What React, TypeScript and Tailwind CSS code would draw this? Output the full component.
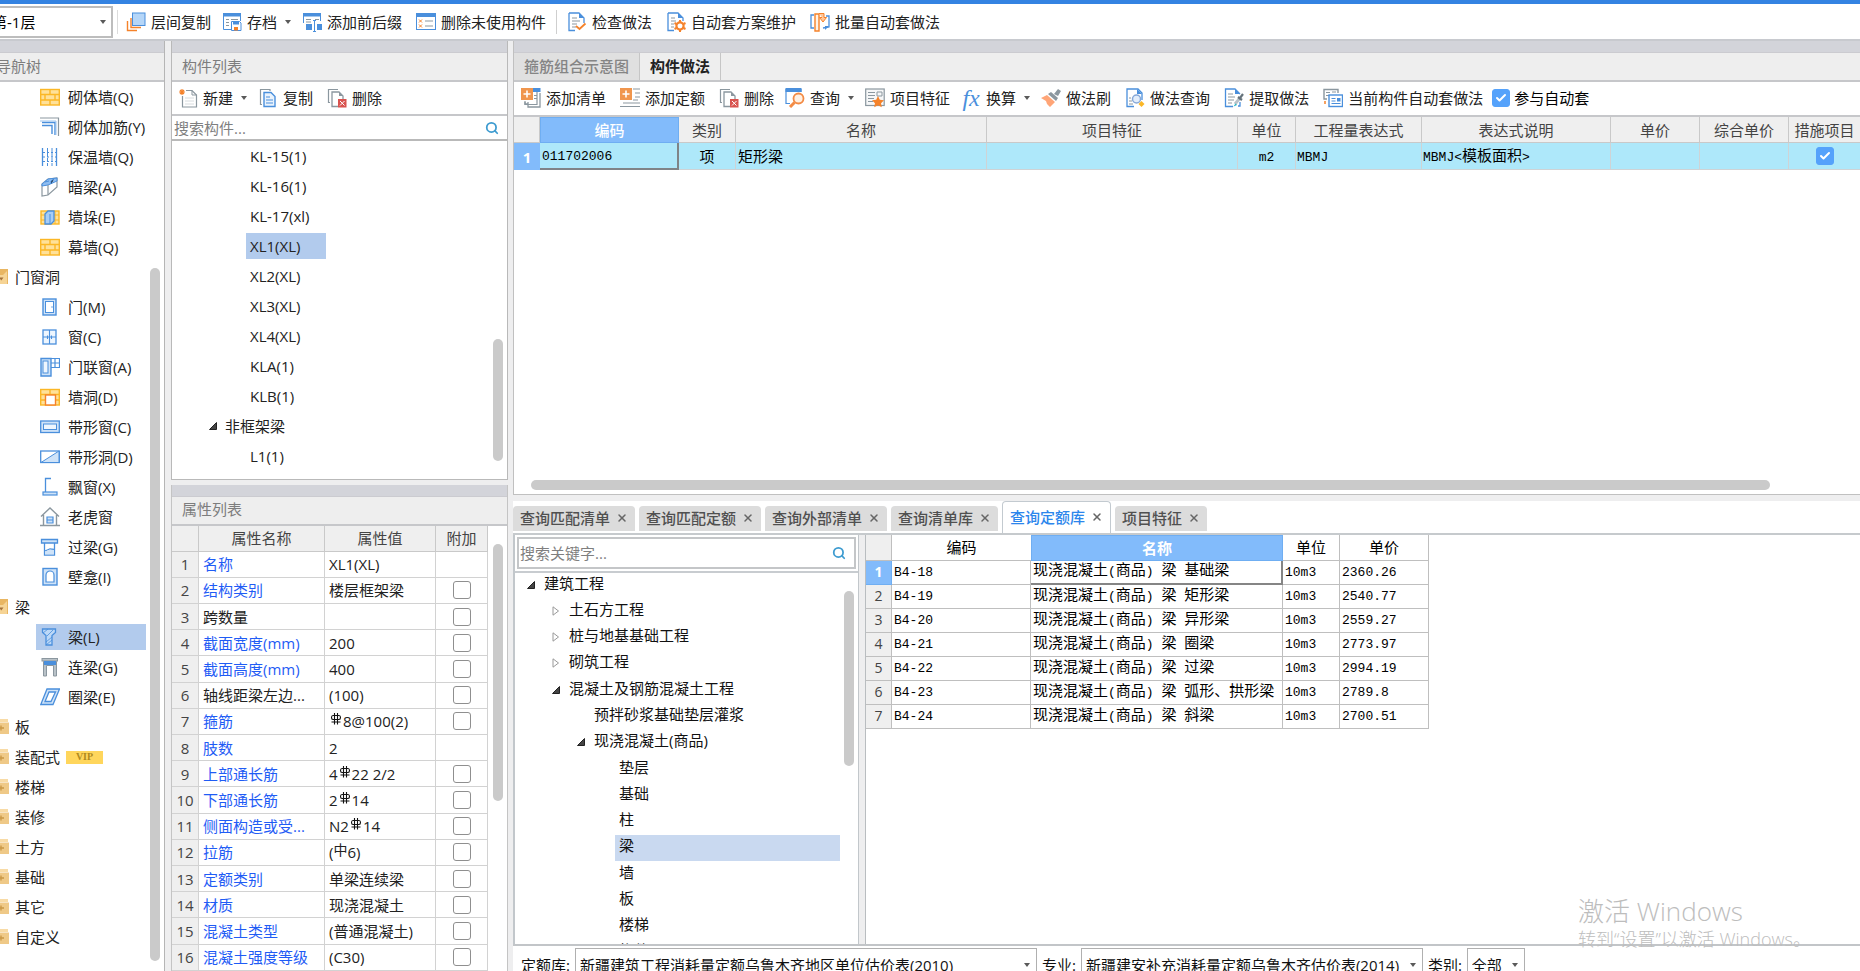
import { useState, type ReactNode } from "react";
import { Check, Search, X } from "lucide-react";
import clsx from "clsx";

const BLUE = "#4a8fdc";
const PALE = "#cfe3f8";
const GRAY = "#8b979f";
const ORANGE = "#f5822a";
const GOLD = "#fbb726";
const SAND = "#ffe199";

/* 20x20 toolbar and tree icons */
const ICONS: Record<string, ReactNode> = {
  layers: (
    <>
      <path d="M1.5 9v9.5H11M5 6v9.5h10" fill="none" stroke={ORANGE} strokeWidth="1.4" />
      <rect x="6.5" y="1" width="12.5" height="12.5" fill="#b5d6f8" stroke={BLUE} />
    </>
  ),
  archive: (
    <>
      <path d="M11 17.5H1.5V2M18.5 2v7" fill="none" stroke={BLUE} />
      <rect x="1" y="1" width="18" height="3.5" fill={BLUE} />
      <path d="M4 7.5h3M9 7.5h7M4 10.5h3M4 13.5h3" stroke={GRAY} />
      <path d="M9.5 9.5h8l1.5 1.5v7.500h-9.5z" fill="#fff" stroke={BLUE} />
      <rect x="11" y="9.500" width="6" height="3" fill={BLUE} />
      <rect x="12" y="15" width="4" height="3.500" fill={ORANGE} />
    </>
  ),
  prefix: (
    <>
      <path d="M1.500 11V2M18.5 2v7" stroke={BLUE} />
      <rect x="1" y="1" width="18" height="3.500" fill={BLUE} />
      <path d="M4 7.500h5M4 10h5M13 7.500h4" stroke={GRAY} />
      <rect x="4" y="12" width="6" height="6" fill={BLUE} />
      <rect x="15" y="12" width="5" height="6" fill={BLUE} />
      <path d="M12.500 9v10M11 8.500h3M11 19.500h3" stroke={BLUE} />
    </>
  ),
  unused: (
    <>
      <rect x=".5" y="1.500" width="19" height="16" fill="#fff" stroke={BLUE} />
      <rect x="0" y="1" width="20" height="4" fill={BLUE} />
      <path d="M3 7.500l3 3m0-3l-3 3M3 12.500l3 3m0-3l-3 3" stroke={ORANGE} />
      <path d="M9 9h8M9 14h8" stroke={GRAY} />
    </>
  ),
  check: (
    <>
      <path d="M2 1h10l5 5v5M8 18.500H2V1" fill="none" stroke={BLUE} strokeWidth="1.300" />
      <path d="M12 1v5h5z" fill={BLUE} />
      <path d="M5 6h5M5 9h8M5 12h5M5 15h4" stroke={GRAY} />
      <path d="M9 14l3.500 3 6-5.500" fill="none" stroke={ORANGE} strokeWidth="1.800" />
    </>
  ),
  plan: (
    <>
      <path d="M2 1h10l5 5v3M8 18.500H2V1" fill="none" stroke={BLUE} strokeWidth="1.300" />
      <path d="M12 1v5h5z" fill={BLUE} />
      <path d="M5 6h4M5 9h5M5 12h3M5 15h3" stroke={GRAY} />
      <circle cx="14" cy="14" r="3.600" fill="#fff" stroke={ORANGE} strokeWidth="2.200" />
      <path d="M14 8v2M14 18v2M8.500 11l2 1M17.500 16l2 1M8.500 17l2-1M17.500 12l2-1" stroke={ORANGE} strokeWidth="2" />
    </>
  ),
  batch: (
    <>
      <path d="M4 3H1v13h3M13 16l6-1V4h-3" fill="none" stroke={BLUE} strokeWidth="1.300" />
      <path d="M19 14l-4 4v-4z" fill={BLUE} />
      <path d="M5 2h4v17H5z" fill="#fff3e8" stroke={ORANGE} strokeWidth="1.400" />
      <path d="M9 1.500h5v4h2.500L13 10 9.500 5.500H12" fill="#ffc79c" stroke={ORANGE} />
    </>
  ),
  create: (
    <>
      <path d="M4.500 8v11h14V7l-4.500-4.500H8" fill="#fff" stroke={GRAY} strokeWidth="1.200" />
      <path d="M14 2.500V7h4.500" fill="none" stroke={GRAY} />
      <path d="M7 10h9M7 13h9M7 16h9" stroke="#d8dcdf" />
      <path d="M4 1v6M1 4h6M2 2l4 4M6 2L2 6" stroke={ORANGE} strokeWidth="1.200" />
    </>
  ),
  copy: (
    <>
      <path d="M4 16.500H2.500v-15H12V3" fill="none" stroke={GRAY} strokeWidth="1.200" />
      <path d="M6 4.500h7l4 4v10H6z" fill="#eaf3fd" stroke={BLUE} strokeWidth="1.400" />
      <path d="M8 9h4M8 12h7M8 15h7" stroke={BLUE} strokeWidth="1.200" />
    </>
  ),
  remove: (
    <>
      <path d="M3 14.500H1.500v-13H11" fill="none" stroke={GRAY} strokeWidth="1.200" />
      <path d="M11 18.500H5V4h7l4 4v3" fill="none" stroke={GRAY} strokeWidth="1.300" />
      <path d="M12 4v4h4z" fill={GRAY} />
      <rect x="11" y="11" width="8.500" height="8.500" fill="#d9534f" />
      <path d="M13 13l4.500 4.500m0-4.500L13 17.500" stroke="#fff" />
    </>
  ),
  addList: (
    <>
      <path d="M4 14v2h3M7 14v5h12V5" fill="none" stroke={GRAY} strokeWidth="1.300" />
      <path d="M4 13v3.500h12V3" fill="none" stroke={GRAY} strokeWidth="1.200" />
      <path d="M13 7.500h3M13 10.500h3" stroke={GRAY} />
      <rect x="12" y="0" width="7.500" height="4" fill={BLUE} />
      <rect x="0" y="0" width="12" height="12" fill="#f0964e" />
      <path d="M6 2.500v7M2.500 6h7" stroke="#fff" strokeWidth="1.600" />
    </>
  ),
  addQuota: (
    <>
      <path d="M13 1h7M15 5h5M15 9h5M13 12h5M3 15h17M0 18.500h20" stroke={GRAY} strokeWidth="1.200" />
      <rect x="0" y="0" width="12" height="12" fill="#f0964e" />
      <path d="M6 2.500v7M2.500 6h7" stroke="#fff" strokeWidth="1.600" />
    </>
  ),
  query: (
    <>
      <path d="M5 15.500H1V1M16 1v3" fill="none" stroke={BLUE} strokeWidth="1.200" />
      <rect x=".5" y="0" width="16" height="4" fill={BLUE} />
      <circle cx="13.500" cy="10.500" r="5" fill="#fff0e2" stroke="#f38b45" strokeWidth="1.800" />
      <path d="M9.500 14.500L5 19" stroke="#f38b45" strokeWidth="3" />
    </>
  ),
  feature: (
    <>
      <rect x=".7" y="1" width="18.500" height="16.500" fill="#f6f7f8" stroke={GRAY} strokeWidth="1.200" />
      <path d="M3 4.500h7M3 7.500h7M3 10.500h6M3 13.500h5M12 4h5v4h-5z" fill="none" stroke={GRAY} />
      <path d="M13 8l1.800 3.800 4.200.5-3 2.900.8 4.100-3.800-2-3.800 2 .8-4.100-3-2.900 4.200-.5z" fill={ORANGE} />
    </>
  ),
  brush: (
    <>
      <path d="M13 6l4-5 3 2-3 5z" fill={GRAY} />
      <path d="M7 6l3-2 7 6-2 3z" fill={GRAY} />
      <path d="M6 7l8 7-5 5-3-3-1-3-5-3z" fill="#ffa577" />
    </>
  ),
  lookup: (
    <>
      <path d="M9 18.500H2V1h11l4 4v7" fill="none" stroke={BLUE} strokeWidth="1.300" />
      <path d="M12 1v5h5z" fill={BLUE} />
      <path d="M4 10h2M4 13h3M4 16h4" stroke={GRAY} />
      <circle cx="11.500" cy="11" r="4" fill="#e2edfb" stroke="#86a8d8" strokeWidth="1.500" />
      <path d="M16.500 13l3 3-3 3-3-3z" fill={GOLD} />
    </>
  ),
  extract: (
    <>
      <path d="M9 18.500H1.500V1H11l5 5M16 14v4h-2" fill="none" stroke={BLUE} strokeWidth="1.300" />
      <path d="M11 1v5h5z" fill={BLUE} />
      <path d="M4 6h5M4 9h7M4 12h6M4 15h4" stroke={GRAY} />
      <path d="M11 16l5-6" stroke="#b9c2c8" strokeWidth="3" />
      <path d="M14 9l4 3M16 10l3-4" stroke="#66737c" strokeWidth="2.200" />
      <path d="M9.500 18.500l2-3 1.500 1.500z" fill="#25b7c6" />
    </>
  ),
  current: (
    <>
      <path d="M4 11H1V1.500h14V5" fill="none" stroke={GRAY} strokeWidth="1.400" />
      <path d="M3 4.500h4M3 7.500h3M9 4h4" stroke={GRAY} />
      <path d="M2 13v3" stroke={ORANGE} strokeWidth="1.500" />
      <rect x="6" y="7" width="13.500" height="11.500" fill="#fff" stroke={BLUE} strokeWidth="1.400" />
      <path d="M8.500 10.500h4M8.500 13h4M8.500 15.500h9" stroke={BLUE} />
      <rect x="14" y="10" width="3.500" height="3.500" fill={BLUE} />
    </>
  ),
  brick: (
    <>
      <rect x=".7" y="2.500" width="18.600" height="15.500" fill={SAND} stroke={GOLD} strokeWidth="1.400" />
      <path d="M1 7.500h18M1 13h18M10 2.500v5M5 7.500V13M15 7.500V13M10 13v5" stroke={GOLD} strokeWidth="1.400" />
    </>
  ),
  rebar: (
    <>
      <path d="M0 1h18.500v18" fill="none" stroke={GRAY} strokeWidth="1.200" />
      <path d="M2 5.500h13V18M2 8.500h10V17" fill="none" stroke={BLUE} strokeWidth="1.400" />
      <path d="M0 4h16v14" fill="none" stroke="#9cc4ef" />
    </>
  ),
  insulation: (
    <>
      <path d="M2.500 1v18M16.500 1v18" stroke={BLUE} strokeWidth="1.300" />
      <path d="M7.500 1v18M12 1v18" stroke={BLUE} strokeDasharray="4 1" />
      <path d="M3 5.500h13M3 10h13M3 14.500h13" stroke={BLUE} strokeDasharray="2 2" />
    </>
  ),
  hiddenBeam: (
    <>
      <path d="M2 7l6-5 9-1v9l-9 8-6 1z" fill="#fff" stroke={GRAY} strokeWidth="1.200" />
      <path d="M2 7l6-5 9-1v3l-9 4-6 1z" fill="#8fbdf0" stroke={BLUE} />
      <path d="M8 8v10" stroke={GRAY} strokeWidth="1.200" />
      <path d="M5 5l4-1m2 3V4l3-2" stroke={BLUE} />
    </>
  ),
  pier: (
    <>
      <rect x="1" y="4" width="18" height="13" fill={SAND} stroke={GOLD} strokeWidth="1.400" />
      <path d="M1 8h18M1 13h18M15 4v13" stroke={GOLD} />
      <path d="M5 7l3-3h6v10l-3 3H5z" fill="#a7cdf6" stroke={BLUE} strokeWidth="1.300" />
      <path d="M10 7v10" stroke={BLUE} />
    </>
  ),
  door: (
    <>
      <rect x="3" y="2" width="13" height="16" fill={PALE} stroke={BLUE} strokeWidth="1.400" />
      <rect x="5.500" y="4.500" width="8" height="11" fill="#fff" stroke={BLUE} />
      <path d="M11.500 10h1" stroke={BLUE} strokeWidth="1.500" />
    </>
  ),
  window: (
    <>
      <rect x="3" y="3" width="13" height="14" fill="#eef6fe" stroke={BLUE} strokeWidth="1.300" />
      <path d="M9.500 3v14M3 10h13M7.500 8.500V12M11.500 8.500V12" stroke={BLUE} strokeWidth="1.100" />
    </>
  ),
  doorWindow: (
    <>
      <path d="M1 1.500h10V19H1z" fill={PALE} stroke={BLUE} strokeWidth="1.400" />
      <rect x="3" y="4" width="5" height="12" fill="#eef6fe" stroke={BLUE} />
      <path d="M11 1.500h8.500v9H11M11 6h8M15 2v8.500" fill="none" stroke={BLUE} strokeWidth="1.200" />
    </>
  ),
  wallHole: (
    <>
      <rect x=".7" y="2.500" width="18.600" height="15.500" fill={SAND} stroke={GOLD} strokeWidth="1.400" />
      <path d="M1 7.500h18M1 13h5M10 2.500v5M15 13h4" stroke={GOLD} strokeWidth="1.400" />
      <rect x="5.500" y="8" width="10" height="10" fill="#fff" stroke={ORANGE} strokeWidth="1.400" />
    </>
  ),
  stripWindow: (
    <>
      <rect x=".7" y="4" width="18.600" height="11.500" fill={PALE} stroke={BLUE} strokeWidth="1.300" />
      <rect x="3.500" y="7" width="13" height="5.500" fill="#eef6fe" stroke={BLUE} />
    </>
  ),
  stripHole: (
    <>
      <rect x=".7" y="4" width="18.600" height="11.500" fill="#fff" stroke={BLUE} strokeWidth="1.300" />
      <path d="M1 15.500L19 4v11.500z" fill={PALE} stroke={BLUE} />
    </>
  ),
  bayWindow: (
    <>
      <path d="M11 1.500H5.500V15" fill="none" stroke={BLUE} strokeWidth="1.300" />
      <rect x="3" y="15" width="14" height="3" fill={PALE} stroke={BLUE} strokeWidth="1.200" />
    </>
  ),
  dormer: (
    <>
      <path d="M1 9.500L10 1l9 8.500M3.500 8v10M16.500 8v10M0 18.500h20" fill="none" stroke={GRAY} strokeWidth="1.400" />
      <path d="M7 10h6v6H7zM7 13h6" fill={PALE} stroke={BLUE} strokeWidth="1.200" />
    </>
  ),
  lintel: (
    <>
      <path d="M1.500 2.500h16V6h-16z" fill={PALE} stroke={BLUE} strokeWidth="1.300" />
      <path d="M4.500 6v12h10V6M5 14l5-2 4 .5" fill="none" stroke={BLUE} strokeWidth="1.300" />
      <path d="M5 14.500l5-2 4 .5v4.500H5z" fill={PALE} />
    </>
  ),
  niche: (
    <>
      <rect x="3" y="1.500" width="14" height="16.500" fill={PALE} stroke={BLUE} strokeWidth="1.400" />
      <path d="M6 15V8a4 4 0 0 1 8 0v7z" fill="#fff" stroke={BLUE} strokeWidth="1.200" />
    </>
  ),
  beam: (
    <>
      <path d="M2.500 2h13v3.500l-3.500 3V18H6V8.500l-3.500-3z" fill="#bcd8f7" stroke={BLUE} strokeWidth="1.300" />
      <path d="M3 6l5-4M7 9l6-6M6 15l6-5M6 18l6-5" stroke={BLUE} strokeWidth=".8" />
    </>
  ),
  linkBeam: (
    <>
      <path d="M3.500 19V4.500h13V19h-3V8.500h-7V19z" fill="#b9c2c8" stroke={GRAY} />
      <rect x="2" y="1.500" width="15.500" height="2.500" fill="#b9c2c8" stroke={GRAY} />
      <rect x="4" y="4" width="12" height="4" fill={BLUE} />
    </>
  ),
  ringBeam: (
    <path d="M7 2h12.500L13 17.500H.8zM9 5h6.500L11 14.500H5z" fill={PALE} fillRule="evenodd" stroke={BLUE} strokeWidth="1.300" />
  ),
  folderOpen: (
    <>
      <path d="M1 4h6l2-2h10v15H1z" fill="#e9b662" />
      <path d="M1 8h13l4-4v13H1z" fill="#f6d495" />
      <path d="M10 10.500h4.500L12.250 13.500z" fill="#a5713a" />
    </>
  ),
  folder: (
    <>
      <path d="M1 4h5l2-2h11v3H1z" fill="#f8dba6" />
      <path d="M1 5.500h19V17H1z" fill="#efc987" />
      <path d="M9 11h6M12 8.500v5" stroke="#c99745" strokeWidth="1.300" />
    </>
  ),
};

function Icon({ name, className }: { name: string; className?: string }) {
  return (
    <svg viewBox="0 0 20 20" className={clsx("size-5 shrink-0", className)} aria-hidden="true">
      {ICONS[name]}
    </svg>
  );
}

function Caret({ className }: { className?: string }) {
  return (
    <svg viewBox="0 0 6 4" className={clsx("h-1 w-1.5 shrink-0", className)} aria-hidden="true">
      <path d="M0 0h6L3 4z" fill="#5a5a5a" />
    </svg>
  );
}

function ToolButton({ icon, label, menu }: { icon: string; label: string; menu?: boolean }) {
  return (
    <button type="button" className={clsx("flex h-7 shrink-0 items-center gap-[5px] whitespace-nowrap rounded hover:bg-blue-50", menu ? "px-0.5" : "px-[5px]")}>
      {icon === "fx" ? (
        <span className="w-5 text-center font-['Liberation_Serif',serif] text-2xl leading-5 italic text-[#4a8fdc]">fx</span>
      ) : (
        <Icon name={icon} />
      )}
      {label}
      {menu && <Caret className="ml-[3px]" />}
    </button>
  );
}

function CheckBox({ id, label, defaultChecked }: { id: string; label?: string; defaultChecked?: boolean }) {
  return (
    <span className="relative inline-flex size-[18px] align-middle">
      <input
        id={id}
        type="checkbox"
        aria-label={label}
        defaultChecked={defaultChecked}
        className="peer size-[18px] appearance-none rounded-[3px] border border-[#8f8f8f] bg-white checked:border-[#55a2fb] checked:bg-[#55a2fb]"
      />
      <Check className="pointer-events-none absolute inset-0 m-auto hidden size-3 text-white peer-checked:block" strokeWidth={4} />
    </span>
  );
}

function PanelTitle({ children }: { children: ReactNode }) {
  return (
    <>
      <div className="h-3 shrink-0 border-b border-[#cbcbd0] bg-[#d3d4da]" />
      <h2 className="flex h-[29px] shrink-0 items-center border-b-2 border-[#c6c7ca] bg-[#eeeeee] px-2.5 pb-0.5 text-[#7d7d7d]">{children}</h2>
    </>
  );
}

/* Song-style grid text: narrow half-width characters between full-width ones */
function GridText({ text }: { text: string }) {
  return (
    <span className="font-['Liberation_Mono','Noto_Sans_CJK_SC',monospace] text-[13px]">
      {text.split(/([^\x00-\x7f]+)/).map((part, i) => (i % 2 ? <span key={i} className="text-[15px]">{part}</span> : part))}
    </span>
  );
}

function Rebar() {
  return (
    <svg viewBox="0 0 12 12" className="mx-px inline-block size-3 align-[2px]" role="img" aria-label="HRB400">
      <path d="M3 2.500h6q1.500 0 1.500 2t-1.500 2H3q-1.500 0-1.500-2t1.500-2zM4.500 0v11.500M7.500 0v11.500M1.500 9h9" fill="none" stroke="#111" strokeWidth="1.100" />
    </svg>
  );
}

const NAV: { label: string; icon?: string; open?: boolean; vip?: boolean }[] = [
  { label: "砌体墙(Q)", icon: "brick" },
  { label: "砌体加筋(Y)", icon: "rebar" },
  { label: "保温墙(Q)", icon: "insulation" },
  { label: "暗梁(A)", icon: "hiddenBeam" },
  { label: "墙垛(E)", icon: "pier" },
  { label: "幕墙(Q)", icon: "brick" },
  { label: "门窗洞", open: true },
  { label: "门(M)", icon: "door" },
  { label: "窗(C)", icon: "window" },
  { label: "门联窗(A)", icon: "doorWindow" },
  { label: "墙洞(D)", icon: "wallHole" },
  { label: "带形窗(C)", icon: "stripWindow" },
  { label: "带形洞(D)", icon: "stripHole" },
  { label: "飘窗(X)", icon: "bayWindow" },
  { label: "老虎窗", icon: "dormer" },
  { label: "过梁(G)", icon: "lintel" },
  { label: "壁龛(I)", icon: "niche" },
  { label: "梁", open: true },
  { label: "梁(L)", icon: "beam" },
  { label: "连梁(G)", icon: "linkBeam" },
  { label: "圈梁(E)", icon: "ringBeam" },
  { label: "板" },
  { label: "装配式", vip: true },
  { label: "楼梯" },
  { label: "装修" },
  { label: "土方" },
  { label: "基础" },
  { label: "其它" },
  { label: "自定义" },
];

function NavTree() {
  const [selected, setSelected] = useState("梁(L)");
  return (
    <aside className="relative flex w-[165px] shrink-0 flex-col overflow-hidden border-r border-[#b5b5b5] bg-white">
      <PanelTitle>
        <span className="-ml-3.5">导航树</span>
      </PanelTitle>
      <ul>
        {NAV.map((item) => (
          <li key={item.label} className="flex h-[30px] items-center">
            {item.icon ? (
              <button
                type="button"
                onClick={() => setSelected(item.label)}
                className={clsx("ml-9 flex h-[26px] w-[110px] items-center gap-2 whitespace-nowrap pl-1", selected === item.label && "bg-[#b2cbed]")}
              >
                <Icon name={item.icon} />
                {item.label}
              </button>
            ) : (
              <button type="button" className="-ml-[11px] flex items-center gap-1.5">
                <Icon name={item.open ? "folderOpen" : "folder"} />
                {item.label}
                {item.vip && (
                  <span className="flex h-[13px] w-[37px] items-center justify-center bg-[#ffd65c] font-['Liberation_Serif',serif] text-[10px] font-bold text-[#b08a1e]">VIP</span>
                )}
              </button>
            )}
          </li>
        ))}
      </ul>
      <div className="absolute top-[227px] right-1 bottom-2.5 w-2.5 rounded-full bg-[#cacaca]" />
    </aside>
  );
}

const COMPONENTS = ["KL-15(1)", "KL-16(1)", "KL-17(xl)", "XL1(XL)", "XL2(XL)", "XL3(XL)", "XL4(XL)", "KLA(1)", "KLB(1)", "非框架梁", "L1(1)"];

function TreeArrow({ open }: { open: boolean }) {
  return (
    <svg viewBox="0 0 8 10" className="h-2.5 w-2 shrink-0" aria-hidden="true">
      {open ? <path d="M7.500 1.500v7H.5z" fill="#444" stroke="#222" /> : <path d="M1 .8v8.400L6.500 5z" fill="#fff" stroke="#999" />}
    </svg>
  );
}

function ComponentList() {
  const [selected, setSelected] = useState("XL1(XL)");
  return (
    <section className="relative flex min-h-0 flex-[438_1_0px] flex-col overflow-hidden border border-t-0 border-[#b9b9b9] bg-white">
      <PanelTitle>构件列表</PanelTitle>
      <div className="flex h-[34px] shrink-0 items-center gap-1 border-b-2 border-[#c6c7ca] px-1">
        <ToolButton icon="create" label="新建" menu />
        <ToolButton icon="copy" label="复制" />
        <ToolButton icon="remove" label="删除" />
      </div>
      <div className="flex h-[25px] shrink-0 items-center border-b-2 border-[#b9b9b9] pr-2">
        <input aria-label="搜索构件" placeholder="搜索构件..." className="min-w-0 flex-1 px-0.5 outline-none placeholder:text-[#7f7f7f]" />
        <Search className="size-3.5 text-[#3d9bd0]" strokeWidth={3} />
      </div>
      <ul>
        {COMPONENTS.map((name) => (
          <li key={name} className="flex h-[30px] items-center">
            {name === "非框架梁" ? (
              <button type="button" className="ml-[37px] flex items-center gap-2">
                <TreeArrow open />
                {name}
              </button>
            ) : (
              <button
                type="button"
                onClick={() => setSelected(name)}
                className={clsx("ml-[74px] h-[26px] w-20 pl-1 text-left", selected === name && "bg-[#b2cbed]")}
              >
                {name}
              </button>
            )}
          </li>
        ))}
      </ul>
      <div className="absolute right-1 bottom-[18px] h-[122px] w-2.5 rounded-full bg-[#cacaca]" />
    </section>
  );
}

const PROPS: { name: string; value: ReactNode; link?: boolean; box?: boolean }[] = [
  { name: "名称", value: "XL1(XL)", link: true },
  { name: "结构类别", value: "楼层框架梁", link: true, box: true },
  { name: "跨数量", value: "", box: true },
  { name: "截面宽度(mm)", value: "200", link: true, box: true },
  { name: "截面高度(mm)", value: "400", link: true, box: true },
  { name: "轴线距梁左边...", value: "(100)", box: true },
  { name: "箍筋", value: <><Rebar />8@100(2)</>, link: true, box: true },
  { name: "肢数", value: "2", link: true },
  { name: "上部通长筋", value: <>4<Rebar />22 2/2</>, link: true, box: true },
  { name: "下部通长筋", value: <>2<Rebar />14</>, link: true, box: true },
  { name: "侧面构造或受...", value: <>N2<Rebar />14</>, link: true, box: true },
  { name: "拉筋", value: <>(<span className="align-[3px] text-sm leading-none">中</span>6)</>, link: true, box: true },
  { name: "定额类别", value: "单梁连续梁", link: true, box: true },
  { name: "材质", value: "现浇混凝土", link: true, box: true },
  { name: "混凝土类型", value: "(普通混凝土)", link: true, box: true },
  { name: "混凝土强度等级", value: "(C30)", link: true, box: true },
];

function PropertyList() {
  const head = "border-r border-b border-[#c9c9c9] font-normal text-[#444]";
  const cell = "border-r border-b border-[#d2d2d2] whitespace-nowrap";
  return (
    <section className="flex min-h-0 flex-[487_1_0px] flex-col overflow-hidden border-x border-[#c4c4c4] bg-white">
      <PanelTitle>属性列表</PanelTitle>
      <div className="relative min-h-0 flex-1">
        <table className="h-full w-[316px] table-fixed border-separate border-spacing-0 leading-5">
          <thead>
            <tr className="h-[26px] bg-[#efefef]">
              <th className={clsx(head, "w-[27px]")} />
              <th className={clsx(head, "w-[126px]")}>属性名称</th>
              <th className={clsx(head, "w-[111px]")}>属性值</th>
              <th className={head}>附加</th>
            </tr>
          </thead>
          <tbody>
            {PROPS.map((row, i) => (
              <tr key={row.name}>
                <td className={clsx(cell, "bg-[#efefef] text-center text-[#444]")}>{i + 1}</td>
                <td className={clsx(cell, "pl-1", row.link && "text-[#1f5cf5]")}>{row.name}</td>
                <td className={clsx(cell, "pl-1")}>{row.value}</td>
                <td className={clsx(cell, "text-center leading-none")}>{row.box && <CheckBox id={`prop-${i}`} label={`${row.name}附加`} />}</td>
              </tr>
            ))}
          </tbody>
        </table>
        <div className="absolute top-[18px] right-1 h-[257px] w-2.5 rounded-full bg-[#cacaca]" />
      </div>
    </section>
  );
}

const METHOD_TOOLS = [
  { icon: "addList", label: "添加清单" },
  { icon: "addQuota", label: "添加定额" },
  { icon: "remove", label: "删除" },
  { icon: "query", label: "查询", menu: true },
  { icon: "feature", label: "项目特征" },
  { icon: "fx", label: "换算", menu: true },
  { icon: "brush", label: "做法刷" },
  { icon: "lookup", label: "做法查询" },
  { icon: "extract", label: "提取做法" },
  { icon: "current", label: "当前构件自动套做法" },
];

function MethodPanel() {
  const head = "border-r border-b border-[#c9c9c9] font-normal";
  const cell = "border-r border-b border-[#cfd3d5] px-px";
  return (
    <section className="relative flex min-h-0 flex-[453_1_0px] flex-col overflow-hidden border-b border-l border-[#c0c0c0] bg-white">
      <div className="h-3 shrink-0 border-b border-[#cbcbd0] bg-[#d3d4da]" />
      <div className="flex h-[29px] shrink-0 border-b-2 border-[#c6c7ca] bg-[#eeeeee]">
        <button type="button" className="border-r border-[#c6c6c6] bg-[#e0e0e0] px-2.5 pb-0.5 font-medium text-[#858585]">箍筋组合示意图</button>
        <button type="button" className="border-r border-[#c6c6c6] px-2.5 pb-0.5 font-bold text-[#222]">构件做法</button>
      </div>
      <div className="flex h-[35px] shrink-0 items-center gap-1 border-b-2 border-[#c6c7ca] px-0.5 pb-0.5">
        {METHOD_TOOLS.map((tool) => (
          <ToolButton key={tool.label} {...tool} />
        ))}
        <CheckBox id="auto-join" defaultChecked />
        <label htmlFor="auto-join" className="whitespace-nowrap text-black">参与自动套</label>
      </div>
      <table className="w-full table-fixed border-separate border-spacing-0 leading-5">
        <thead>
          <tr className="h-[26px] bg-[#efefef] text-[#444]">
            <th className={clsx(head, "w-[26px]")} />
            <th className="w-[139px] border border-[#6faef2] bg-[#82bbfb] font-medium text-white">编码</th>
            <th className={clsx(head, "w-[57px]")}>类别</th>
            <th className={head}>名称</th>
            <th className={head}>项目特征</th>
            <th className={clsx(head, "w-[58px]")}>单位</th>
            <th className={clsx(head, "w-[126px]")}>工程量表达式</th>
            <th className={clsx(head, "w-[189px]")}>表达式说明</th>
            <th className={clsx(head, "w-[89px]")}>单价</th>
            <th className={clsx(head, "w-[89px]")}>综合单价</th>
            <th className="w-[71px] border-b border-[#c9c9c9] font-normal whitespace-nowrap">措施项目</th>
          </tr>
        </thead>
        <tbody>
          <tr className="h-[27px] bg-[#aee8fa] text-black">
            <td className="bg-[#82bbfb] text-center font-bold text-white">1</td>
            <td className="border-r-2 border-b-2 border-[#7f8487] pl-0.5"><GridText text="011702006" /></td>
            <td className={clsx(cell, "text-center")}>项</td>
            <td className={clsx(cell, "pl-0.5")}>矩形梁</td>
            <td className={cell} />
            <td className={clsx(cell, "text-center")}><GridText text="m2" /></td>
            <td className={cell}><GridText text="MBMJ" /></td>
            <td className={cell}><GridText text="MBMJ<模板面积>" /></td>
            <td className={cell} />
            <td className={cell} />
            <td className="border-b border-[#cfd3d5] text-center leading-none"><CheckBox id="measure" label="措施项目" defaultChecked /></td>
          </tr>
        </tbody>
      </table>
      <div className="absolute right-[90px] bottom-1 left-[17px] h-2.5 rounded-full bg-[#cacaca]" />
    </section>
  );
}

const TABS = ["查询匹配清单", "查询匹配定额", "查询外部清单", "查询清单库", "查询定额库", "项目特征"];

/* level is the indent step, arrow is missing on leaves */
const CATALOG: { label: string; level: number; arrow?: "open" | "closed" }[] = [
  { label: "建筑工程", level: 0, arrow: "open" },
  { label: "土石方工程", level: 1, arrow: "closed" },
  { label: "桩与地基基础工程", level: 1, arrow: "closed" },
  { label: "砌筑工程", level: 1, arrow: "closed" },
  { label: "混凝土及钢筋混凝土工程", level: 1, arrow: "open" },
  { label: "预拌砂浆基础垫层灌浆", level: 2 },
  { label: "现浇混凝土(商品)", level: 2, arrow: "open" },
  { label: "垫层", level: 3 },
  { label: "基础", level: 3 },
  { label: "柱", level: 3 },
  { label: "梁", level: 3 },
  { label: "墙", level: 3 },
  { label: "板", level: 3 },
  { label: "楼梯", level: 3 },
  { label: "构件", level: 3 },
];
const INDENT = ["pl-3", "pl-[37px]", "pl-[62px]", "pl-[87px]"];

const QUOTAS = [
  ["B4-18", "基础梁", "2360.26"],
  ["B4-19", "矩形梁", "2540.77"],
  ["B4-20", "异形梁", "2559.27"],
  ["B4-21", "圈梁", "2773.97"],
  ["B4-22", "过梁", "2994.19"],
  ["B4-23", "弧形、拱形梁", "2789.8"],
  ["B4-24", "斜梁", "2700.51"],
];

function Catalog() {
  const [selected, setSelected] = useState("梁");
  return (
    <div className="relative flex w-[346px] shrink-0 flex-col overflow-hidden border-r border-l-2 border-[#c2c7cb] bg-white">
      <div className="shrink-0 border-b-2 border-[#c8ccd0] p-0.5">
        <div className="flex h-8 items-center border-2 border-[#c4c6c8] pr-2">
          <input aria-label="搜索关键字" placeholder="搜索关键字..." className="min-w-0 flex-1 px-px outline-none placeholder:text-[#7f7f7f]" />
          <Search className="size-3.5 text-[#3d9bd0]" strokeWidth={3} />
        </div>
      </div>
      <ul className="grid h-[394px] shrink-0 auto-rows-fr text-[#111]">
        {CATALOG.map((node) => (
          <li key={node.label} className={clsx("flex", INDENT[node.level])}>
            <button
              type="button"
              onClick={() => setSelected(node.label)}
              className={clsx("flex items-center whitespace-nowrap pb-1.5", node.level === 3 && "ml-[13px] w-[225px] pl-1", node.level !== 3 && !node.arrow && "pl-[17px]", selected === node.label && "bg-[#c9d9f0]")}
            >
              {node.arrow && <span className="mr-[9px] pt-1"><TreeArrow open={node.arrow === "open"} /></span>}
              {node.label}
            </button>
          </li>
        ))}
      </ul>
      <div className="absolute top-14 right-1 h-[175px] w-2.5 rounded-full bg-[#cacaca]" />
    </div>
  );
}

function QuotaTable() {
  const cell = "border-r border-b border-[#bfbfbf] pl-0.5";
  return (
    <div className="min-w-0 flex-1 overflow-hidden border-l border-[#b9bdc0] bg-white">
      <table className="w-[563px] table-fixed border-separate border-spacing-0 leading-4 text-black">
        <thead>
          <tr className="h-[26px]">
            <th className="w-[26px] border-r border-b border-[#bfbfbf] bg-[#efefef]" />
            <th className="w-[139px] border-b border-[#bfbfbf] font-normal">编码</th>
            <th className="w-[252px] border border-[#6faef2] bg-[#82bbfb] font-bold text-white">名称</th>
            <th className="w-[57px] border-r border-b border-[#bfbfbf] font-normal">单位</th>
            <th className="border-r border-b border-[#bfbfbf] font-normal">单价</th>
          </tr>
        </thead>
        <tbody>
          {QUOTAS.map(([code, name, price], i) => (
            <tr key={code} className="h-6">
              <td className={clsx("border-r border-b text-center text-sm leading-4", i === 0 ? "border-[#6faef2] bg-[#82bbfb] font-bold text-white" : "border-[#bfbfbf] bg-[#efefef] text-[#444]")}>{i + 1}</td>
              <td className={clsx(cell, "pb-0.5")}><GridText text={code} /></td>
              <td className={clsx("whitespace-nowrap pb-0.5 pl-0.5", i === 0 ? "border-r-2 border-b-2 border-[#858585]" : "border-r border-b border-[#bfbfbf]")}>
                <GridText text={`现浇混凝土(商品) 梁 ${name}`} />
              </td>
              <td className={clsx(cell, "pb-0.5")}><GridText text="10m3" /></td>
              <td className={clsx(cell, "pb-0.5")}><GridText text={price} /></td>
            </tr>
          ))}
        </tbody>
      </table>
    </div>
  );
}

function FilterSelect({ id, label, value, width }: { id: string; label: string; value: string; width: string }) {
  return (
    <>
      <label htmlFor={id} className="mx-[5px] whitespace-nowrap">{label}</label>
      <span className={clsx("relative flex h-[34px] shrink-0", width)}>
        <select id={id} className="w-full appearance-none border border-[#b0b0b0] bg-white pl-1">
          <option>{value}</option>
        </select>
        <Caret className="pointer-events-none absolute top-[15px] right-[7px]" />
      </span>
    </>
  );
}

function QueryPanel() {
  const [active, setActive] = useState("查询定额库");
  return (
    <section className="flex min-h-0 flex-[471_1_0px] flex-col overflow-hidden">
      <div className="flex h-[34px] shrink-0 items-end gap-1 border-b-2 border-[#c6cacd] bg-white">
        {TABS.map((tab) => (
          <div
            key={tab}
            className={clsx(
              "flex items-center gap-1.5 rounded-t px-[7px] font-medium whitespace-nowrap",
              tab === active ? "h-8 border border-b-0 border-[#c3cad0] bg-white text-[#2c86ec]" : "mb-0.5 h-[25px] bg-[#dcdcdc] text-[#505050]"
            )}
          >
            <button type="button" onClick={() => setActive(tab)}>{tab}</button>
            <button type="button" aria-label={`关闭${tab}`}><X className="size-3 text-[#666]" strokeWidth={3} /></button>
          </div>
        ))}
      </div>
      <div className="flex min-h-0 flex-1 gap-1.5">
        <Catalog />
        <QuotaTable />
      </div>
      <div className="flex h-[27px] shrink-0 items-start overflow-hidden border-t-2 border-[#c2c5c8] bg-white pt-0.5">
        <div className="flex items-center pl-[3px] text-[#111]">
          <FilterSelect id="library" label="定额库:" value="新疆建筑工程消耗量定额乌鲁木齐地区单位估价表(2010)" width="w-[462px]" />
          <FilterSelect id="major" label="专业:" value="新疆建安补充消耗量定额乌鲁木齐估价表(2014)" width="w-[342px]" />
          <FilterSelect id="kind" label="类别:" value="全部" width="w-[58px]" />
        </div>
      </div>
    </section>
  );
}

export default function App() {
  return (
    <div className="relative flex h-screen flex-col overflow-hidden bg-[#eeeeef] font-['Open_Sans','Noto_Sans_CJK_SC',sans-serif] text-[15px] leading-5 text-[#222]">
      <header className="flex h-[41px] shrink-0 items-center gap-1 border-t-4 border-b-2 border-t-[#3483e2] border-b-[#c8cacf] bg-white">
        <span className="relative -ml-3 flex h-8 w-[125px] shrink-0">
          <select aria-label="楼层" className="w-full appearance-none border-2 border-[#bdbdbd] bg-white pl-0.5 text-black">
            <option>第-1层</option>
          </select>
          <Caret className="pointer-events-none absolute top-3.5 right-[7px]" />
        </span>
        <span className="-mr-px h-6 w-px bg-[#dcdcdc]" />
        <ToolButton icon="layers" label="层间复制" />
        <ToolButton icon="archive" label="存档" menu />
        <ToolButton icon="prefix" label="添加前后缀" />
        <ToolButton icon="unused" label="删除未使用构件" />
        <span className="mx-px h-6 w-px bg-[#cfcfcf]" />
        <ToolButton icon="check" label="检查做法" />
        <ToolButton icon="plan" label="自动套方案维护" />
        <ToolButton icon="batch" label="批量自动套做法" />
      </header>
      <main className="flex min-h-0 flex-1">
        <NavTree />
        <div className="mr-[5px] ml-1.5 flex w-[337px] shrink-0 flex-col gap-[5px]">
          <ComponentList />
          <PropertyList />
        </div>
        <div className="flex min-w-0 flex-1 flex-col gap-1.5">
          <MethodPanel />
          <QueryPanel />
        </div>
      </main>
      <div className="pointer-events-none absolute right-11 bottom-5 w-[238px] whitespace-nowrap text-[#bdbdbd]">
        <p className="text-[26px] leading-8 font-light">激活 Windows</p>
        <p className="text-lg leading-6 font-light">转到“设置”以激活 Windows。</p>
      </div>
    </div>
  );
}
